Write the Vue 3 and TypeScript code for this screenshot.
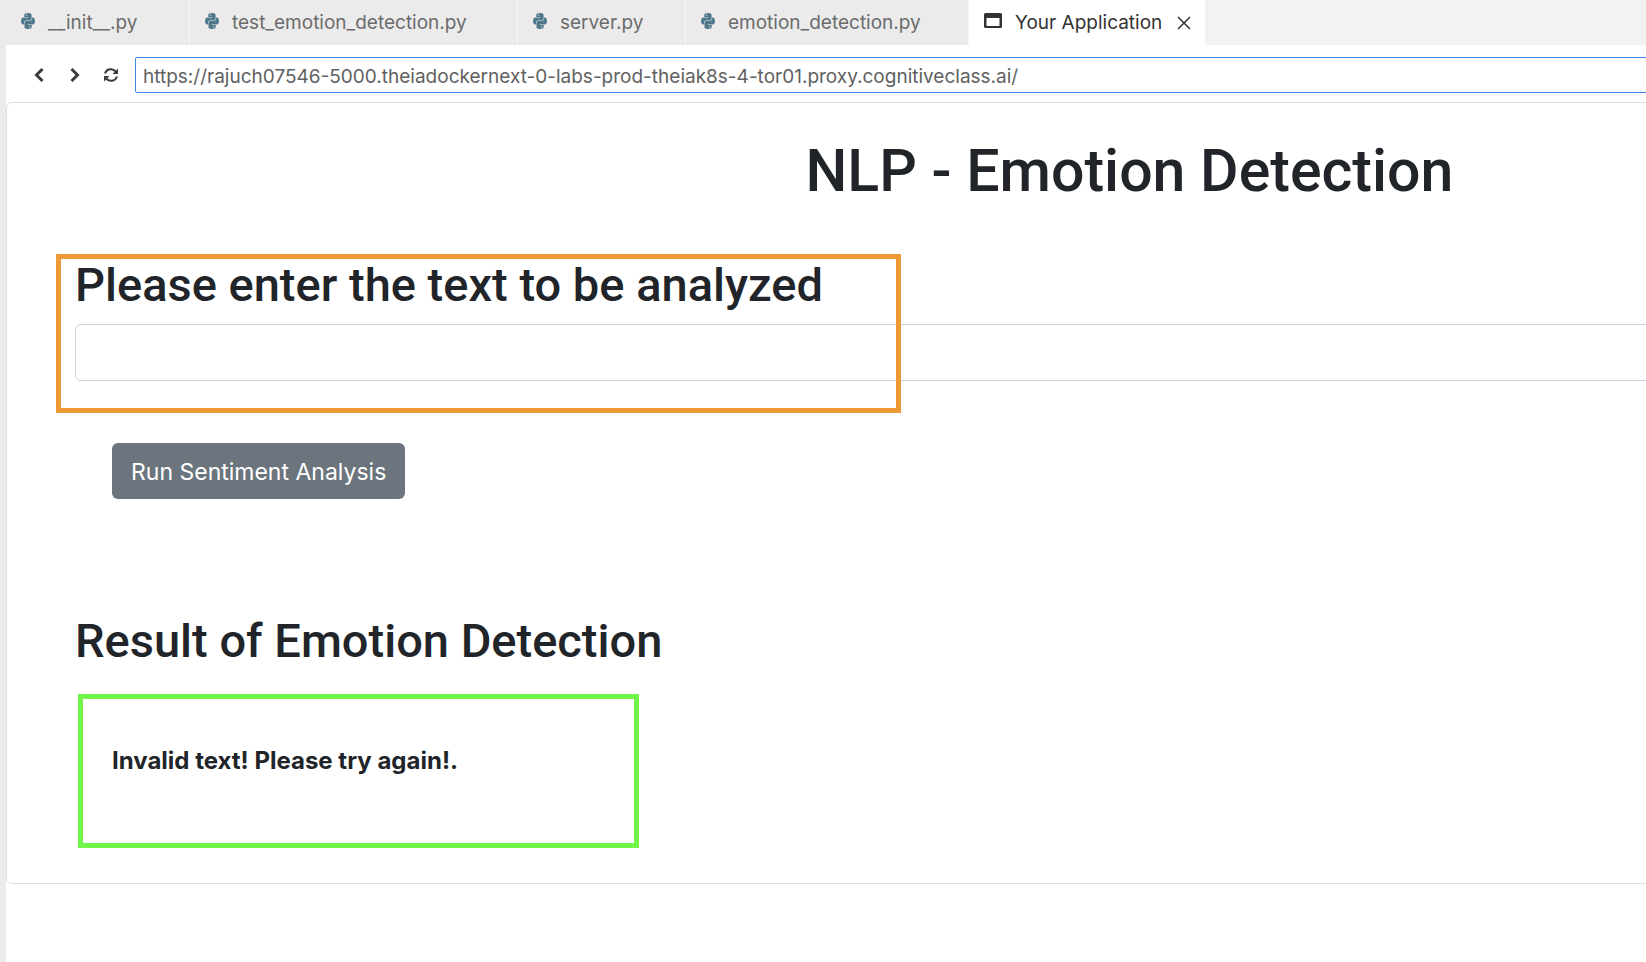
<script setup lang="ts">
import { ref } from 'vue'

interface Tab {
  name: string
  kind: 'python' | 'preview'
}

const tabs: Tab[] = [
  { name: '__init__.py', kind: 'python' },
  { name: 'test_emotion_detection.py', kind: 'python' },
  { name: 'server.py', kind: 'python' },
  { name: 'emotion_detection.py', kind: 'python' },
  { name: 'Your Application', kind: 'preview' },
]

const active = ref(4)
const address = ref('https://rajuch07546-5000.theiadockernext-0-labs-prod-theiak8s-4-tor01.proxy.cognitiveclass.ai/')
const textToAnalyze = ref('')
const result = ref('Invalid text! Please try again!.')

function runAnalysis(): void {
  if (!textToAnalyze.value.trim()) {
    result.value = 'Invalid text! Please try again!.'
  }
}
</script>

<template>
  <div class="window">
    <nav class="tabs" aria-label="Open editors">
      <div v-for="(tab, i) in tabs" :key="tab.name" class="tab" :class="{ active: i === active }">
        <button type="button" class="tab-label" @click="active = i">
          <svg v-if="tab.kind === 'python'" class="python" viewBox="0 0 14 16" aria-hidden="true">
            <path d="M7 0C4.500 0 3.200.8 3.200 2.200V4H7.200V4.400H2.200C.8 4.400 0 5.900 0 8s.8 3.600 2.200 3.600H3V9.700C3 8.400 4 7.500 5.200 7.500H8.700C9.800 7.500 10.600 6.800 10.600 5.800V2.200C10.600.8 9.500 0 7 0ZM5.200 1.400a.7.7 0 1 1 0 1.400.7.7 0 0 1 0-1.400Z" />
            <path d="M7 16c2.500 0 3.800-.8 3.800-2.200V12H6.800v-.4h5c1.400 0 2.200-1.500 2.200-3.600s-.8-3.600-2.200-3.600H11V6.100C11 7.400 10.100 8.100 8.900 8.100H5.400C4.200 8.100 3.400 9.200 3.400 10.200v3.600C3.400 15.200 4.500 16 7 16Zm1.800-1.400a.7.7 0 1 1 0-1.400.7.7 0 0 1 0 1.400Z" />
          </svg>
          <svg v-else class="preview" viewBox="0 0 18 15" aria-hidden="true">
            <path fill-rule="evenodd" d="M1.500 0h15A1.500 1.500 0 0 1 18 1.500v12a1.500 1.500 0 0 1-1.500 1.500h-15A1.500 1.500 0 0 1 0 13.500v-12A1.500 1.500 0 0 1 1.500 0ZM2.500 5v8h13V5Z" />
          </svg>
          <span>{{ tab.name }}</span>
        </button>
        <button v-if="i === active" type="button" class="close" aria-label="Close tab">
          <svg viewBox="0 0 14 14" aria-hidden="true"><path d="M1 1 13 13M13 1 1 13" /></svg>
        </button>
      </div>
    </nav>

    <div class="workspace">
      <form class="toolbar" @submit.prevent>
        <button type="button" class="nav" aria-label="Back">
          <svg viewBox="0 0 16 16" aria-hidden="true"><path class="chevron" d="M11.500 2 5.500 8l6 6" /></svg>
        </button>
        <button type="button" class="nav" aria-label="Forward">
          <svg viewBox="0 0 16 16" aria-hidden="true"><path class="chevron" d="M4.500 2l6 6-6 6" /></svg>
        </button>
        <button type="button" class="nav" aria-label="Reload">
          <svg viewBox="0 0 16 16" aria-hidden="true">
            <path class="arc" d="M2 6.500A6.200 6.200 0 0 1 12.700 4.500M14 9.500A6.200 6.200 0 0 1 3.300 11.500" />
            <path class="solid" d="M15 1.500V7H9.500ZM1 14.500V9h5.500Z" />
          </svg>
        </button>
        <input v-model="address" class="address" type="text" aria-label="Address" spellcheck="false" />
      </form>

      <main class="card">
        <h1>NLP - Emotion Detection</h1>

        <section class="entry">
          <h2><label for="analyze">Please enter the text to be analyzed</label></h2>
          <input id="analyze" v-model="textToAnalyze" class="field" type="text" />
          <div class="highlight" aria-hidden="true"></div>
        </section>

        <button type="button" class="run" @click="runAnalysis">Run Sentiment Analysis</button>

        <section>
          <h2>Result of Emotion Detection</h2>
          <div class="result" role="status"><strong>{{ result }}</strong></div>
        </section>
      </main>
    </div>
  </div>
</template>

<style>
body {
  margin: 0;
  background: #fff;
}
</style>

<style scoped>
* {
  box-sizing: border-box;
}

.window {
  display: flex;
  flex-direction: column;
  min-height: 100vh;
  overflow: hidden;
  font-family: Inter, "Liberation Sans", sans-serif;
  color: #212529;
}

button {
  padding: 0;
  border: 0;
  background: none;
  color: inherit;
  font: inherit;
  white-space: nowrap;
  cursor: pointer;
}

.tabs {
  display: grid;
  grid-template-columns: 190px 328px 168px 283px max-content;
  height: 45px;
  background: #f2f2f2;
}

.tab {
  display: flex;
  align-items: center;
  padding-left: 15px;
  border-right: 1px solid #f6f6f6;
  background: #ebebeb;
  color: #6b6b6b;
  font-size: 19px;
}

.tab:first-child {
  padding-left: 21px;
}

.tab.active {
  gap: 15px;
  padding-right: 14px;
  border-right: 0;
  background: #fff;
  color: #333;
}

.tab-label {
  display: flex;
  align-items: center;
  gap: 13px;
  line-height: 24px;
}

.python {
  width: 14px;
  height: 16px;
  margin-bottom: 4px;
  fill: #52788e;
}

.preview {
  width: 18px;
  height: 15px;
  margin-bottom: 4px;
  fill: #333;
}

.close svg {
  display: block;
  width: 14px;
  height: 14px;
  fill: none;
  stroke: #333;
  stroke-width: 1.5;
}

.workspace {
  flex: 1;
  border-left: 6px solid #ebebeb;
}

.toolbar {
  display: flex;
  align-items: center;
  gap: 20px;
  padding: 12px 0 9px 25px;
}

.nav svg {
  display: block;
  width: 16px;
  height: 16px;
}

.chevron,
.arc {
  fill: none;
  stroke: #3b3b3b;
  stroke-width: 3;
}

.arc {
  stroke-width: 2;
}

.solid {
  fill: #3b3b3b;
}

.address {
  flex: 1;
  height: 36px;
  margin: 0 -8px 0 -4px;
  padding: 2px 7px 0;
  border: 1px solid #3f87e5;
  border-radius: 2px;
  outline: 0;
  color: #616161;
  font: 19px Inter, "Liberation Sans", sans-serif;
}

/* The previewed page is wider than the pane and is clipped on the right. */
.card {
  width: 137%;
  padding: 30px 68px 35px;
  border: 1px solid #dfdfdf;
  border-radius: 6px;
}

h1,
h2 {
  margin: 0;
  font-family: Roboto, Inter, sans-serif;
  font-weight: 500;
}

h1 {
  margin-bottom: 45px;
  font-size: 59px;
  line-height: 76px;
  text-align: center;
}

h2 {
  font-size: 47px;
  line-height: 62px;
}

.entry {
  position: relative;
}

.field {
  display: block;
  width: 100%;
  height: 57px;
  margin-top: 8px;
  padding: 9px 18px;
  border: 1px solid #ced4da;
  border-radius: 6px;
  outline: 0;
  color: inherit;
  font: 24px Inter, "Liberation Sans", sans-serif;
}

.highlight {
  position: absolute;
  top: 0;
  left: -19px;
  width: 845px;
  height: 159px;
  border: 5px solid #ef9837;
  pointer-events: none;
}

.run {
  display: block;
  margin: 62px 0 111px 37px;
  padding: 11px 19px 9px;
  border-radius: 6px;
  background: #6c757d;
  color: #fff;
  font-size: 23px;
  line-height: 36px;
}

.result {
  width: 561px;
  margin: 22px 0 0 3px;
  padding: 44px 29px 64px;
  border: 5px solid #72f54a;
  font-size: 24px;
  line-height: 36px;
}
</style>
